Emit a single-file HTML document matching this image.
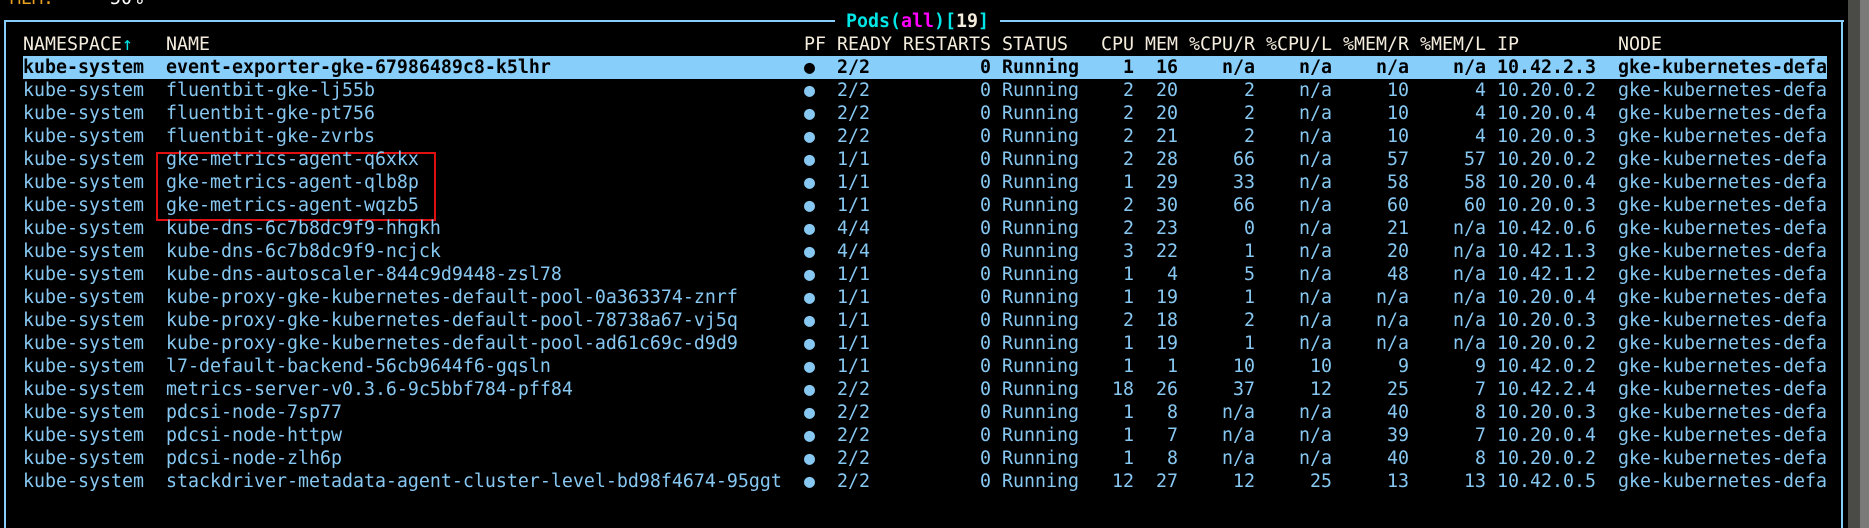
<!DOCTYPE html>
<html><head><meta charset="utf-8"><style>
*{margin:0;padding:0;box-sizing:border-box}
html,body{width:1869px;height:528px;background:#000;overflow:hidden}
body{position:relative;font-family:"DejaVu Sans Mono","Liberation Mono",monospace;font-size:18.27px;color:#87c8f2;line-height:23px}
.top{position:absolute;top:-13px;white-space:pre}
.bl{position:absolute;background:#87cefa}
.r{position:absolute;left:23px;width:1804px;height:23px;white-space:pre}
.r span{position:absolute;top:0}
.sel{background:#87cefa;color:#000;font-weight:bold}
.h{color:#f4ecdc}
.a{left:0}.b{left:143px}.pf{left:781px}.rd{left:814px}.st{left:979px}.ip{left:1474px}.nd{left:1595px}
.R{width:120px;text-align:right}
.rs{left:848px}.cp{left:991px}.me{left:1035px}.c1{left:1112px}.c2{left:1189px}.m1{left:1266px}.m2{left:1343px}
.title{position:absolute;top:10px;left:835px;background:#000;padding:0 11px;font-weight:bold;color:#00e5e5;white-space:pre;line-height:24px}
</style></head><body>
<div class="top" style="left:10px;color:#e8a020">MEM:</div><div class="top" style="left:110px;color:#fff">50%</div>
<div class="bl" style="left:4px;top:20px;width:1840px;height:2px"></div>
<div class="bl" style="left:4px;top:20px;width:2px;height:508px"></div>
<div class="bl" style="left:1841px;top:20px;width:2px;height:508px"></div>
<div style="position:absolute;left:1848px;top:0;width:12px;height:528px;background:#4a4a47"></div>
<div style="position:absolute;left:1860px;top:0;width:9px;height:528px;background:#7a7a78"></div>
<div class="title">Pods(<span style="color:#ff00ff">all</span>)[<span style="color:#f4ecdc">19</span>]</div>
<div style="position:absolute;left:156px;top:152px;width:280px;height:69px;border:2px solid #e01010"></div>

<div class="r h" style="top:33px"><span class="a">NAMESPACE<span style="position:static;color:#00e5e5">↑</span></span><span class="b">NAME</span><span class="pf">PF</span><span class="rd">READY</span><span style="left:880px">RESTARTS</span><span class="st">STATUS</span><span style="left:1078px">CPU</span><span style="left:1122px">MEM</span><span style="left:1166px">%CPU/R</span><span style="left:1243px">%CPU/L</span><span style="left:1320px">%MEM/R</span><span style="left:1397px">%MEM/L</span><span class="ip">IP</span><span class="nd">NODE</span></div>

<div class="r sel" style="top:56px"><span class="a">kube-system</span><span class="b">event-exporter-gke-67986489c8-k5lhr</span><span class="pf">●</span><span class="rd">2/2</span><span class="R rs">0</span><span class="st">Running</span><span class="R cp">1</span><span class="R me">16</span><span class="R c1">n/a</span><span class="R c2">n/a</span><span class="R m1">n/a</span><span class="R m2">n/a</span><span class="ip">10.42.2.3</span><span class="nd">gke-kubernetes-defa</span></div>
<div class="r" style="top:79px"><span class="a">kube-system</span><span class="b">fluentbit-gke-lj55b</span><span class="pf">●</span><span class="rd">2/2</span><span class="R rs">0</span><span class="st">Running</span><span class="R cp">2</span><span class="R me">20</span><span class="R c1">2</span><span class="R c2">n/a</span><span class="R m1">10</span><span class="R m2">4</span><span class="ip">10.20.0.2</span><span class="nd">gke-kubernetes-defa</span></div>
<div class="r" style="top:102px"><span class="a">kube-system</span><span class="b">fluentbit-gke-pt756</span><span class="pf">●</span><span class="rd">2/2</span><span class="R rs">0</span><span class="st">Running</span><span class="R cp">2</span><span class="R me">20</span><span class="R c1">2</span><span class="R c2">n/a</span><span class="R m1">10</span><span class="R m2">4</span><span class="ip">10.20.0.4</span><span class="nd">gke-kubernetes-defa</span></div>
<div class="r" style="top:125px"><span class="a">kube-system</span><span class="b">fluentbit-gke-zvrbs</span><span class="pf">●</span><span class="rd">2/2</span><span class="R rs">0</span><span class="st">Running</span><span class="R cp">2</span><span class="R me">21</span><span class="R c1">2</span><span class="R c2">n/a</span><span class="R m1">10</span><span class="R m2">4</span><span class="ip">10.20.0.3</span><span class="nd">gke-kubernetes-defa</span></div>
<div class="r" style="top:148px"><span class="a">kube-system</span><span class="b">gke-metrics-agent-q6xkx</span><span class="pf">●</span><span class="rd">1/1</span><span class="R rs">0</span><span class="st">Running</span><span class="R cp">2</span><span class="R me">28</span><span class="R c1">66</span><span class="R c2">n/a</span><span class="R m1">57</span><span class="R m2">57</span><span class="ip">10.20.0.2</span><span class="nd">gke-kubernetes-defa</span></div>
<div class="r" style="top:171px"><span class="a">kube-system</span><span class="b">gke-metrics-agent-qlb8p</span><span class="pf">●</span><span class="rd">1/1</span><span class="R rs">0</span><span class="st">Running</span><span class="R cp">1</span><span class="R me">29</span><span class="R c1">33</span><span class="R c2">n/a</span><span class="R m1">58</span><span class="R m2">58</span><span class="ip">10.20.0.4</span><span class="nd">gke-kubernetes-defa</span></div>
<div class="r" style="top:194px"><span class="a">kube-system</span><span class="b">gke-metrics-agent-wqzb5</span><span class="pf">●</span><span class="rd">1/1</span><span class="R rs">0</span><span class="st">Running</span><span class="R cp">2</span><span class="R me">30</span><span class="R c1">66</span><span class="R c2">n/a</span><span class="R m1">60</span><span class="R m2">60</span><span class="ip">10.20.0.3</span><span class="nd">gke-kubernetes-defa</span></div>
<div class="r" style="top:217px"><span class="a">kube-system</span><span class="b">kube-dns-6c7b8dc9f9-hhgkh</span><span class="pf">●</span><span class="rd">4/4</span><span class="R rs">0</span><span class="st">Running</span><span class="R cp">2</span><span class="R me">23</span><span class="R c1">0</span><span class="R c2">n/a</span><span class="R m1">21</span><span class="R m2">n/a</span><span class="ip">10.42.0.6</span><span class="nd">gke-kubernetes-defa</span></div>
<div class="r" style="top:240px"><span class="a">kube-system</span><span class="b">kube-dns-6c7b8dc9f9-ncjck</span><span class="pf">●</span><span class="rd">4/4</span><span class="R rs">0</span><span class="st">Running</span><span class="R cp">3</span><span class="R me">22</span><span class="R c1">1</span><span class="R c2">n/a</span><span class="R m1">20</span><span class="R m2">n/a</span><span class="ip">10.42.1.3</span><span class="nd">gke-kubernetes-defa</span></div>
<div class="r" style="top:263px"><span class="a">kube-system</span><span class="b">kube-dns-autoscaler-844c9d9448-zsl78</span><span class="pf">●</span><span class="rd">1/1</span><span class="R rs">0</span><span class="st">Running</span><span class="R cp">1</span><span class="R me">4</span><span class="R c1">5</span><span class="R c2">n/a</span><span class="R m1">48</span><span class="R m2">n/a</span><span class="ip">10.42.1.2</span><span class="nd">gke-kubernetes-defa</span></div>
<div class="r" style="top:286px"><span class="a">kube-system</span><span class="b">kube-proxy-gke-kubernetes-default-pool-0a363374-znrf</span><span class="pf">●</span><span class="rd">1/1</span><span class="R rs">0</span><span class="st">Running</span><span class="R cp">1</span><span class="R me">19</span><span class="R c1">1</span><span class="R c2">n/a</span><span class="R m1">n/a</span><span class="R m2">n/a</span><span class="ip">10.20.0.4</span><span class="nd">gke-kubernetes-defa</span></div>
<div class="r" style="top:309px"><span class="a">kube-system</span><span class="b">kube-proxy-gke-kubernetes-default-pool-78738a67-vj5q</span><span class="pf">●</span><span class="rd">1/1</span><span class="R rs">0</span><span class="st">Running</span><span class="R cp">2</span><span class="R me">18</span><span class="R c1">2</span><span class="R c2">n/a</span><span class="R m1">n/a</span><span class="R m2">n/a</span><span class="ip">10.20.0.3</span><span class="nd">gke-kubernetes-defa</span></div>
<div class="r" style="top:332px"><span class="a">kube-system</span><span class="b">kube-proxy-gke-kubernetes-default-pool-ad61c69c-d9d9</span><span class="pf">●</span><span class="rd">1/1</span><span class="R rs">0</span><span class="st">Running</span><span class="R cp">1</span><span class="R me">19</span><span class="R c1">1</span><span class="R c2">n/a</span><span class="R m1">n/a</span><span class="R m2">n/a</span><span class="ip">10.20.0.2</span><span class="nd">gke-kubernetes-defa</span></div>
<div class="r" style="top:355px"><span class="a">kube-system</span><span class="b">l7-default-backend-56cb9644f6-gqsln</span><span class="pf">●</span><span class="rd">1/1</span><span class="R rs">0</span><span class="st">Running</span><span class="R cp">1</span><span class="R me">1</span><span class="R c1">10</span><span class="R c2">10</span><span class="R m1">9</span><span class="R m2">9</span><span class="ip">10.42.0.2</span><span class="nd">gke-kubernetes-defa</span></div>
<div class="r" style="top:378px"><span class="a">kube-system</span><span class="b">metrics-server-v0.3.6-9c5bbf784-pff84</span><span class="pf">●</span><span class="rd">2/2</span><span class="R rs">0</span><span class="st">Running</span><span class="R cp">18</span><span class="R me">26</span><span class="R c1">37</span><span class="R c2">12</span><span class="R m1">25</span><span class="R m2">7</span><span class="ip">10.42.2.4</span><span class="nd">gke-kubernetes-defa</span></div>
<div class="r" style="top:401px"><span class="a">kube-system</span><span class="b">pdcsi-node-7sp77</span><span class="pf">●</span><span class="rd">2/2</span><span class="R rs">0</span><span class="st">Running</span><span class="R cp">1</span><span class="R me">8</span><span class="R c1">n/a</span><span class="R c2">n/a</span><span class="R m1">40</span><span class="R m2">8</span><span class="ip">10.20.0.3</span><span class="nd">gke-kubernetes-defa</span></div>
<div class="r" style="top:424px"><span class="a">kube-system</span><span class="b">pdcsi-node-httpw</span><span class="pf">●</span><span class="rd">2/2</span><span class="R rs">0</span><span class="st">Running</span><span class="R cp">1</span><span class="R me">7</span><span class="R c1">n/a</span><span class="R c2">n/a</span><span class="R m1">39</span><span class="R m2">7</span><span class="ip">10.20.0.4</span><span class="nd">gke-kubernetes-defa</span></div>
<div class="r" style="top:447px"><span class="a">kube-system</span><span class="b">pdcsi-node-zlh6p</span><span class="pf">●</span><span class="rd">2/2</span><span class="R rs">0</span><span class="st">Running</span><span class="R cp">1</span><span class="R me">8</span><span class="R c1">n/a</span><span class="R c2">n/a</span><span class="R m1">40</span><span class="R m2">8</span><span class="ip">10.20.0.2</span><span class="nd">gke-kubernetes-defa</span></div>
<div class="r" style="top:470px"><span class="a">kube-system</span><span class="b">stackdriver-metadata-agent-cluster-level-bd98f4674-95ggt</span><span class="pf">●</span><span class="rd">2/2</span><span class="R rs">0</span><span class="st">Running</span><span class="R cp">12</span><span class="R me">27</span><span class="R c1">12</span><span class="R c2">25</span><span class="R m1">13</span><span class="R m2">13</span><span class="ip">10.42.0.5</span><span class="nd">gke-kubernetes-defa</span></div>
</body></html>
